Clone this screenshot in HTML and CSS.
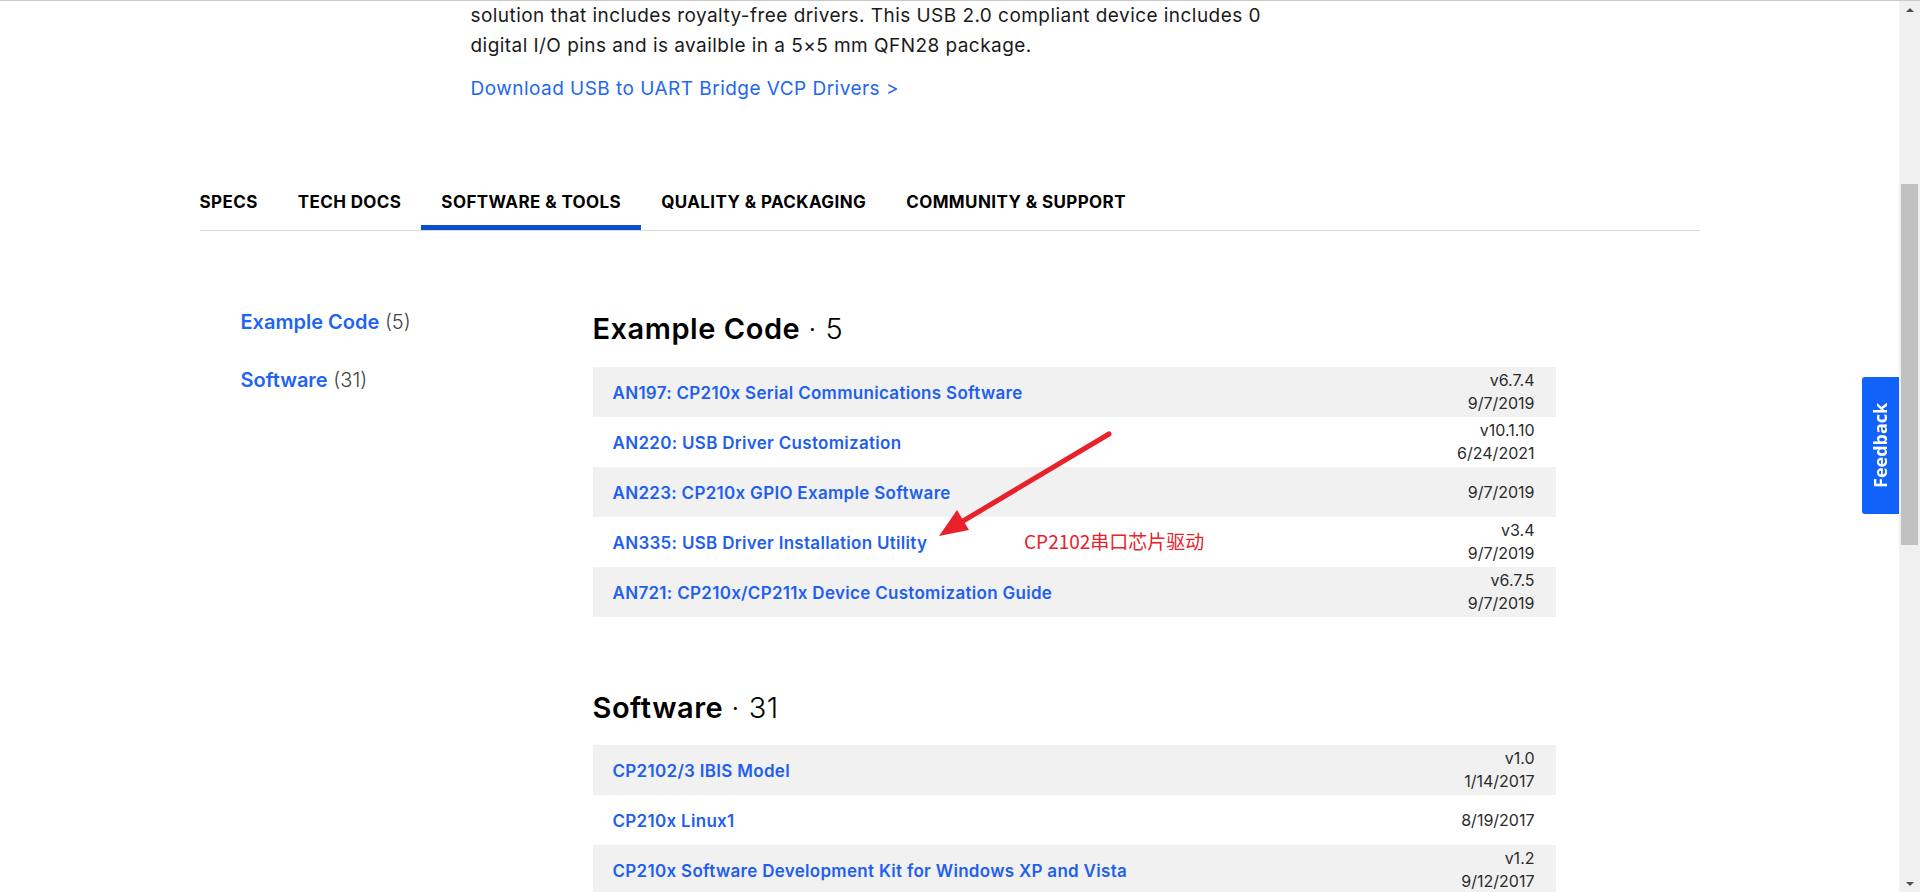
FILE: index.html
```html
<!DOCTYPE html>
<html lang="en">
<head>
<meta charset="utf-8">
<title>CP2102 USB to UART Bridge - Software &amp; Tools</title>
<link rel="stylesheet" href="styles.css">
</head>
<body>
<div class="window">
  <div class="page">
    <div class="container">
      <section class="intro">
        <p class="intro-text">solution that includes royalty-free drivers. This USB 2.0 compliant device includes 0<br>digital I/O pins and is availble in a 5×5 mm QFN28 package.</p>
        <a class="intro-link" href="#">Download USB to UART Bridge VCP Drivers &gt;</a>
      </section>

      <nav class="tabs-bar">
        <div class="tab-list">
          <a class="tab" href="#">SPECS</a>
          <a class="tab" href="#">TECH DOCS</a>
          <a class="tab tab-active" href="#">SOFTWARE &amp; TOOLS</a>
          <a class="tab" href="#">QUALITY &amp; PACKAGING</a>
          <a class="tab" href="#">COMMUNITY &amp; SUPPORT</a>
        </div>
      </nav>

      <section class="resources">
        <aside class="side-nav">
          <a class="side-item" href="#"><span class="side-name">Example Code</span> <span class="side-count">(5)</span></a>
          <a class="side-item" href="#"><span class="side-name">Software</span> <span class="side-count">(31)</span></a>
        </aside>
        <div class="main">
          <h2 class="group-title">Example Code <span class="group-count">· 5</span></h2>
          <ul class="rows">
            <li class="row"><a class="row-title" href="#">AN197: CP210x Serial Communications Software</a><div class="row-meta"><span>v6.7.4</span><span>9/7/2019</span></div></li>
            <li class="row"><a class="row-title" href="#">AN220: USB Driver Customization</a><div class="row-meta"><span>v10.1.10</span><span>6/24/2021</span></div></li>
            <li class="row"><a class="row-title" href="#">AN223: CP210x GPIO Example Software</a><div class="row-meta"><span>9/7/2019</span></div></li>
            <li class="row"><a class="row-title" href="#">AN335: USB Driver Installation Utility</a><div class="row-meta"><span>v3.4</span><span>9/7/2019</span></div></li>
            <li class="row"><a class="row-title" href="#">AN721: CP210x/CP211x Device Customization Guide</a><div class="row-meta"><span>v6.7.5</span><span>9/7/2019</span></div></li>
          </ul>

          <h2 class="group-title group-title-next">Software <span class="group-count">· 31</span></h2>
          <ul class="rows">
            <li class="row"><a class="row-title" href="#">CP2102/3 IBIS Model</a><div class="row-meta"><span>v1.0</span><span>1/14/2017</span></div></li>
            <li class="row"><a class="row-title" href="#">CP210x Linux1</a><div class="row-meta"><span>8/19/2017</span></div></li>
            <li class="row"><a class="row-title" href="#">CP210x Software Development Kit for Windows XP and Vista</a><div class="row-meta"><span>v1.2</span><span>9/12/2017</span></div></li>
          </ul>
        </div>
      </section>
    </div>

    <svg class="annot-arrow" width="200" height="130" viewBox="0 0 200 130" aria-hidden="true">
      <line x1="178" y1="12" x2="22" y2="105" stroke="#e8212b" stroke-width="5" stroke-linecap="round"/>
      <polygon points="8,114 26,88 38,108" fill="#e8212b"/>
    </svg>
    <span class="annot-text">CP2102串口芯片驱动</span>
  </div>

  <div class="scrollbar">
    <div class="sb-btn"><span class="sb-arrow-up"></span></div>
    <div class="sb-track"><div class="sb-thumb"></div></div>
    <div class="sb-btn"><span class="sb-arrow-down"></span></div>
  </div>
</div>
<a class="feedback" href="#">Feedback</a>
</body>
</html>
```

FILE: styles.css
```css
* { box-sizing: border-box; }

html, body {
  margin: 0;
  padding: 0;
  height: 892px;
  overflow: hidden;
  background: #ffffff;
  font-family: "Inter", "Noto Sans", sans-serif;
  color: #111;
}

a { text-decoration: none; }

.window {
  display: flex;
  height: 892px;
  border-top: 1px solid #c9c9c9;
}

.page {
  position: relative;
  flex: 1;
  overflow: hidden;
}

.container {
  width: 1500px;
  margin: 0 auto;
}

/* intro */
.intro {
  padding-left: 271px;
}
.intro-text {
  margin: 0;
  font-size: 19px;
  line-height: 30px;
  letter-spacing: 0.45px;
  color: #1a1a1a;
}
.intro-link {
  display: block;
  margin-top: 13px;
  font-size: 19px;
  line-height: 30px;
  letter-spacing: 0.47px;
  color: #2466f0;
}

/* tabs */
.tabs-bar {
  margin-top: 70px;
  border-bottom: 1px solid #d6d6d6;
}
.tab-list {
  display: flex;
  margin-left: -20px;
}
.tab {
  display: block;
  padding: 6px 20px 0;
  line-height: 45px;
  border-bottom: 5px solid transparent;
  font-size: 17px;
  font-weight: 700;
  color: #000;
  letter-spacing: 0.4px;
}
.tab-active {
  border-bottom-color: #0a4fcf;
}

/* resources */
.resources {
  display: grid;
  grid-template-columns: 393px 963px;
  padding-top: 79px;
}
.side-nav {
  padding-left: 41px;
}
.side-item {
  display: block;
  font-size: 20px;
  line-height: 24px;
  margin-bottom: 34px;
}
.side-name {
  color: #1f64f2;
  font-weight: 600;
}
.side-count {
  color: #444;
  font-weight: 300;
}

.group-title {
  margin: 0 0 21px;
  padding-top: 1px;
  font-size: 29px;
  line-height: 35px;
  font-weight: 600;
  letter-spacing: 0.55px;
  color: #000;
}
.group-title-next {
  margin-top: 72px;
  margin-bottom: 20px;
}
.group-count {
  font-weight: 300;
}

.rows {
  list-style: none;
  margin: 0;
  padding: 0;
}
.row {
  display: flex;
  align-items: center;
  justify-content: space-between;
  height: 50px;
  padding: 0 21px 0 20px;
}
.row:nth-child(odd) {
  background: #f1f1f1;
}
.row-title {
  padding-top: 2px;
  font-size: 17px;
  font-weight: 600;
  letter-spacing: 0.3px;
  color: #1f5ff0;
}
.row-meta {
  display: flex;
  flex-direction: column;
  align-items: flex-end;
  font-size: 16px;
  line-height: 23px;
  color: #2b2b2b;
}

/* annotation overlay */
.annot-arrow {
  position: absolute;
  left: 931px;
  top: 421px;
}
.annot-text {
  position: absolute;
  left: 1024px;
  top: 527px;
  font-family: "Noto Sans CJK SC", "Noto Sans", sans-serif;
  font-size: 19px;
  line-height: 26px;
  color: #e8212b;
}

/* scrollbar */
.scrollbar {
  width: 21px;
  display: flex;
  flex-direction: column;
  background: #f0f0f0;
}
.sb-btn {
  height: 17px;
  display: flex;
  align-items: center;
  justify-content: center;
}
.sb-arrow-up {
  width: 0;
  height: 0;
  border-left: 4px solid transparent;
  border-right: 4px solid transparent;
  border-bottom: 4px solid #505050;
}
.sb-arrow-down {
  width: 0;
  height: 0;
  border-left: 4px solid transparent;
  border-right: 4px solid transparent;
  border-top: 4px solid #505050;
}
.sb-track {
  flex: 1;
  padding: 166px 2px 0;
}
.sb-thumb {
  height: 361px;
  background: #c1c1c1;
}

/* feedback tab */
.feedback {
  position: fixed;
  right: 21px;
  top: 377px;
  width: 37px;
  height: 137px;
  display: flex;
  align-items: center;
  justify-content: center;
  background: #1062fb;
  color: #fff;
  font-family: "Open Sans", "Noto Sans", sans-serif;
  font-weight: 700;
  font-size: 18px;
  writing-mode: vertical-rl;
  transform: rotate(180deg);
  border-radius: 0 3px 3px 0;
}
```
